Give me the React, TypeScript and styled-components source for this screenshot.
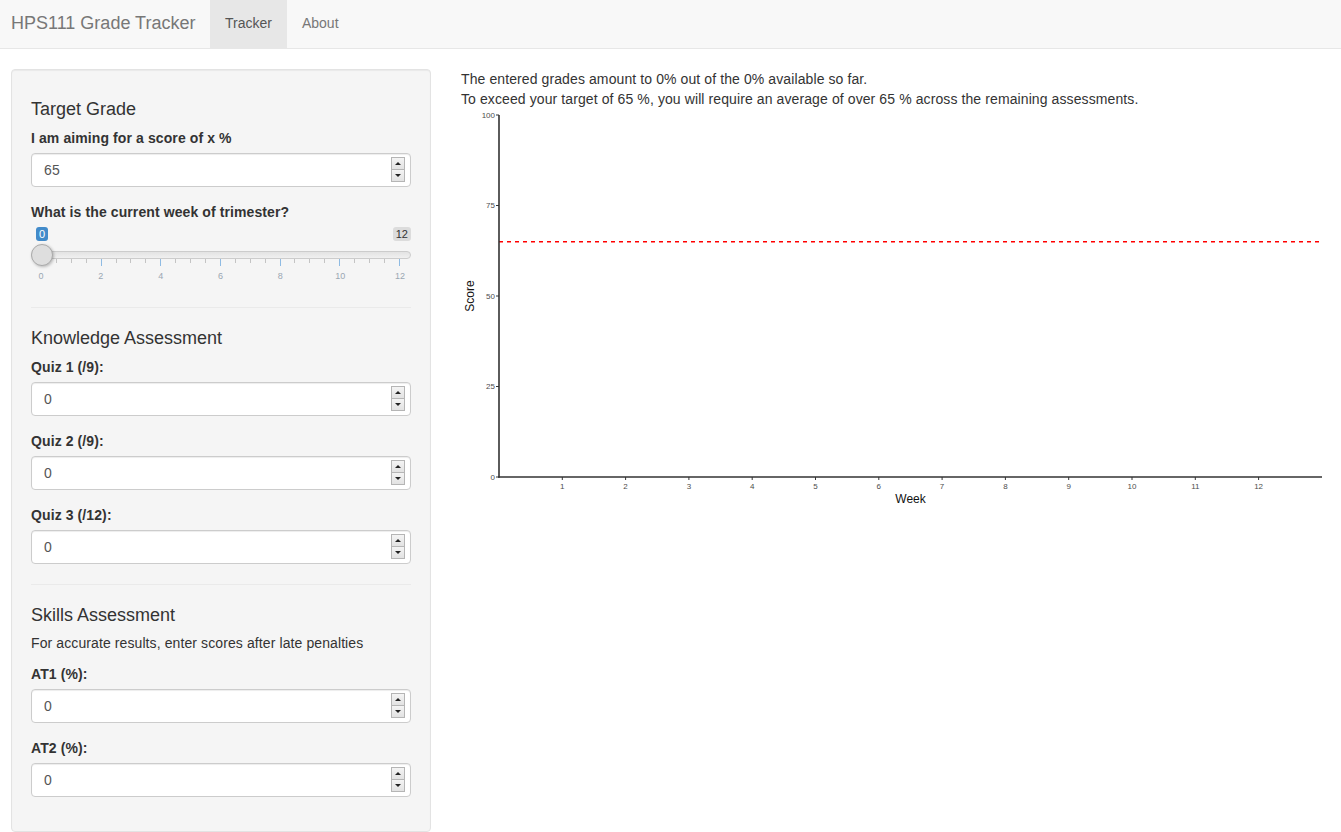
import React from "react";
import styled, { createGlobalStyle } from "styled-components";

const GlobalStyle = createGlobalStyle`
  * { box-sizing: border-box; }
  body {
    margin: 0;
    background: #fff;
    color: #333;
    font-family: "Liberation Sans", Arial, Helvetica, sans-serif;
    font-size: 14px;
    line-height: 1.42857;
    letter-spacing: 0.1px;
  }
`;

const Navbar = styled.nav`
  display: flex;
  height: 49px;
  background: #f8f8f8;
  border-bottom: 1px solid #e7e7e7;
  letter-spacing: 0;
`;

const Brand = styled.div`
  width: 210px;
  padding-left: 11px;
  display: flex;
  align-items: center;
  font-size: 18px;
  color: #777;
`;

const NavTab = styled.div<{ $active?: boolean }>`
  display: flex;
  align-items: center;
  padding: 0 15px;
  height: 48px;
  font-size: 14px;
  color: ${(p) => (p.$active ? "#555" : "#777")};
  background: ${(p) => (p.$active ? "#e7e7e7" : "transparent")};
`;

const Page = styled.div`
  display: flex;
  gap: 30px;
  padding: 20px 15px 0 11px;
  align-items: flex-start;
`;

const Well = styled.div`
  width: 420px;
  flex: none;
  background: #f5f5f5;
  border: 1px solid #e3e3e3;
  border-radius: 4px;
  box-shadow: inset 0 1px 1px rgba(0, 0, 0, 0.05);
  padding: 19px;
`;

const SectionTitle = styled.h4`
  font-size: 18px;
  font-weight: 500;
  line-height: 1.1;
  letter-spacing: 0;
  margin: 10px 0 8px;
  padding-top: 1px;
  color: #333;
`;

const FormGroup = styled.div`
  margin-bottom: 15px;
`;

const Label = styled.label`
  display: block;
  font-weight: 700;
  line-height: 20px;
  margin-bottom: 5px;
  max-width: 100%;
`;

const HelpText = styled.p`
  margin: 0 0 10px;
  padding-top: 1px;
`;

const Rule = styled.hr`
  margin: 20px 0;
  border: 0;
  border-top: 1px solid #eaeaea;
`;

const InputWrap = styled.div`
  position: relative;
  height: 34px;
`;

const NumberBox = styled.div`
  height: 34px;
  padding: 6px 12px;
  font-size: 14px;
  line-height: 20px;
  color: #555;
  background: #fff;
  border: 1px solid #ccc;
  border-radius: 4px;
  box-shadow: inset 0 1px 1px rgba(0, 0, 0, 0.075);
`;

const Spinner = styled.div`
  position: absolute;
  right: 6px;
  top: 4px;
  width: 14px;
  height: 25px;
  display: flex;
  flex-direction: column;
  border: 1px solid #b5b5b5;
  background: #f0f0f0;
`;

const SpinButton = styled.div<{ $down?: boolean }>`
  flex: 1;
  display: flex;
  align-items: center;
  justify-content: center;
  background: linear-gradient(#f4f4f4, #e2e2e2);
  border-top: ${(p) => (p.$down ? "1px solid #b5b5b5" : "0")};
  &::after {
    content: "";
    width: 0;
    height: 0;
    border-left: 3px solid transparent;
    border-right: 3px solid transparent;
    ${(p) =>
      p.$down
        ? "border-top: 3px solid #222;"
        : "border-bottom: 3px solid #222;"}
  }
`;

const SliderWrap = styled.div`
  position: relative;
  height: 60px;
  letter-spacing: 0;
`;

const BadgeRow = styled.div`
  display: flex;
  justify-content: space-between;
  padding-left: 5px;
  height: 14px;
`;

const Badge = styled.span<{ $primary?: boolean }>`
  font-size: 11px;
  line-height: 14px;
  padding: 0 3px;
  border-radius: 3px;
  color: ${(p) => (p.$primary ? "#fff" : "#333")};
  background: ${(p) => (p.$primary ? "#428bca" : "rgba(0,0,0,0.1)")};
`;

const Track = styled.div`
  margin-top: 10px;
  height: 8px;
  border: 1px solid #cccccc;
  border-radius: 8px;
  background: linear-gradient(#e3e3e3, #f0f0f0);
`;

const Handle = styled.div`
  position: absolute;
  left: 0;
  top: 17px;
  width: 22px;
  height: 22px;
  border-radius: 50%;
  background: #dedede;
  border: 1px solid #ababab;
  box-shadow: 1px 1px 3px rgba(0, 0, 0, 0.25);
`;

const Grid = styled.div`
  margin: 0 11px 0 10px;
`;

const Ticks = styled.div`
  display: flex;
  justify-content: space-between;
  align-items: flex-start;
  height: 8px;
`;

const Tick = styled.span<{ $major?: boolean }>`
  width: 1px;
  height: ${(p) => (p.$major ? "7px" : "4px")};
  background: ${(p) => (p.$major ? "#8fbbe3" : "#c4c4c4")};
`;

const TickLabels = styled.div`
  display: flex;
  justify-content: space-between;
  margin: 3px -10px 0;
`;

const TickLabel = styled.span`
  width: 20px;
  text-align: center;
  font-size: 9px;
  line-height: 12px;
  color: #9aa7b3;
`;

const Main = styled.div`
  flex: 1;
  min-width: 0;
`;

const Line = styled.div`
  line-height: 20px;
`;

const PlotSvg = styled.svg`
  display: block;
  width: 865px;
  height: 400px;
  letter-spacing: 0;
  font-family: "Liberation Sans", Arial, sans-serif;
`;

function NumberInput({ value }: { value: string }) {
  return (
    <InputWrap>
      <NumberBox>{value}</NumberBox>
      <Spinner>
        <SpinButton />
        <SpinButton $down />
      </Spinner>
    </InputWrap>
  );
}

function Field({ label, value }: { label: string; value: string }) {
  return (
    <FormGroup>
      <Label>{label}</Label>
      <NumberInput value={value} />
    </FormGroup>
  );
}

function WeekSlider() {
  const ticks = Array.from({ length: 25 }, (_, i) => i);
  const labels = [0, 2, 4, 6, 8, 10, 12];
  return (
    <SliderWrap>
      <BadgeRow>
        <Badge $primary>0</Badge>
        <Badge>12</Badge>
      </BadgeRow>
      <Track />
      <Grid>
        <Ticks>
          {ticks.map((t) => (
            <Tick key={t} $major={t % 4 === 0} />
          ))}
        </Ticks>
        <TickLabels>
          {labels.map((l) => (
            <TickLabel key={l}>{l}</TickLabel>
          ))}
        </TickLabels>
      </Grid>
      <Handle />
    </SliderWrap>
  );
}

function Plot() {
  const x0 = 38;
  const y0 = 368;
  const xs = (w: number) => x0 + w * 63.3;
  const ys = (v: number) => y0 - v * 3.62;
  const xEnd = 861;
  return (
    <PlotSvg viewBox="0 0 865 400">
      <line
        x1={x0}
        x2={xEnd}
        y1={ys(65)}
        y2={ys(65)}
        stroke="#ff0000"
        strokeWidth={1.4}
        strokeDasharray="4 4"
      />
      <line x1={x0} x2={x0} y1={ys(100)} y2={y0 + 0.75} stroke="#333" strokeWidth={1.6} />
      <line x1={x0 - 0.75} x2={xEnd} y1={y0} y2={y0} stroke="#333" strokeWidth={1.6} />
      {[0, 25, 50, 75, 100].map((v) => (
        <g key={v}>
          <line x1={x0 - 3} x2={x0} y1={ys(v)} y2={ys(v)} stroke="#333" strokeWidth={1} />
          <text
            x={x0 - 4}
            y={ys(v) + 2.8}
            textAnchor="end"
            fontSize={8}
            fill="#4d4d4d"
          >
            {v}
          </text>
        </g>
      ))}
      {Array.from({ length: 12 }, (_, i) => i + 1).map((w) => (
        <g key={w}>
          <line x1={xs(w)} x2={xs(w)} y1={y0} y2={y0 + 3} stroke="#333" strokeWidth={1} />
          <text x={xs(w)} y={y0 + 12} textAnchor="middle" fontSize={8} fill="#4d4d4d">
            {w}
          </text>
        </g>
      ))}
      <text x={(x0 + xEnd) / 2} y={394} textAnchor="middle" fontSize={12} fill="#111">
        Week
      </text>
      <text
        transform={`translate(13 ${ys(50)}) rotate(-90)`}
        textAnchor="middle"
        fontSize={12}
        fill="#111"
      >
        Score
      </text>
    </PlotSvg>
  );
}

export default function App() {
  return (
    <>
      <GlobalStyle />
      <Navbar>
        <Brand>HPS111 Grade Tracker</Brand>
        <NavTab $active>Tracker</NavTab>
        <NavTab>About</NavTab>
      </Navbar>
      <Page>
        <Well>
          <SectionTitle>Target Grade</SectionTitle>
          <Field label="I am aiming for a score of x %" value="65" />
          <FormGroup>
            <Label>What is the current week of trimester?</Label>
            <WeekSlider />
          </FormGroup>
          <Rule />
          <SectionTitle>Knowledge Assessment</SectionTitle>
          <Field label="Quiz 1 (/9):" value="0" />
          <Field label="Quiz 2 (/9):" value="0" />
          <Field label="Quiz 3 (/12):" value="0" />
          <Rule />
          <SectionTitle>Skills Assessment</SectionTitle>
          <HelpText>For accurate results, enter scores after late penalties</HelpText>
          <Field label="AT1 (%):" value="0" />
          <Field label="AT2 (%):" value="0" />
        </Well>
        <Main>
          <Line>The entered grades amount to 0% out of the 0% available so far.</Line>
          <Line>
            To exceed your target of 65 %, you will require an average of over 65 % across the
            remaining assessments.
          </Line>
          <Plot />
        </Main>
      </Page>
    </>
  );
}
